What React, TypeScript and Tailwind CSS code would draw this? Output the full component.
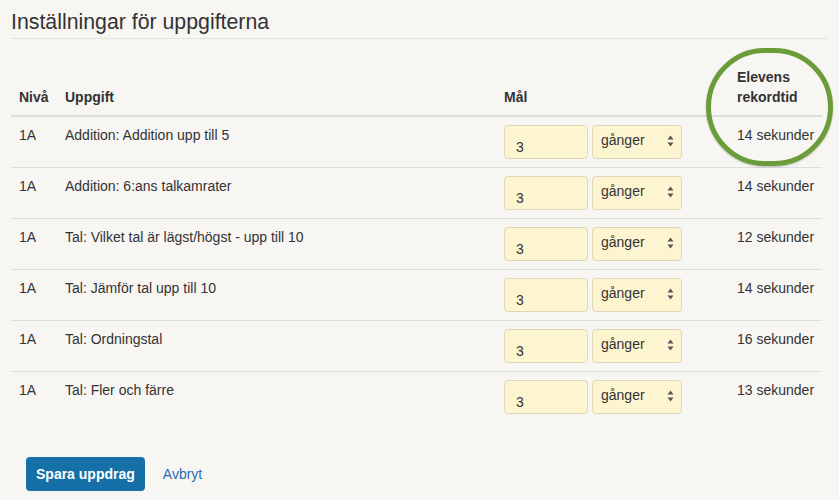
import React from 'react';

type Task = {
  level: string;
  name: string;
  goal: number;
  record: number;
};

const TASKS: Task[] = [
  { level: '1A', name: 'Addition: Addition upp till 5', goal: 3, record: 14 },
  { level: '1A', name: 'Addition: 6:ans talkamrater', goal: 3, record: 14 },
  { level: '1A', name: 'Tal: Vilket tal är lägst/högst - upp till 10', goal: 3, record: 12 },
  { level: '1A', name: 'Tal: Jämför tal upp till 10', goal: 3, record: 14 },
  { level: '1A', name: 'Tal: Ordningstal', goal: 3, record: 16 },
  { level: '1A', name: 'Tal: Fler och färre', goal: 3, record: 13 },
];

const SelectArrows = (): JSX.Element => (
  <svg width="7" height="12" viewBox="0 0 7 12" className="text-[#555]">
    <path d="M3.5 0.5 L6.5 4.5 H0.5 Z" fill="currentColor" />
    <path d="M3.5 11.5 L6.5 7.5 H0.5 Z" fill="currentColor" />
  </svg>
);

const TaskRow = ({ task, last }: { task: Task; last: boolean }): JSX.Element => (
  <tr className={last ? '' : 'border-b border-[#dddddd]'}>
    <td className="px-2 pt-2 pb-2 align-top">{task.level}</td>
    <td className="px-2 pt-2 pb-2 align-top">{task.name}</td>
    <td className="px-2 pt-2 pb-2 align-top">
      <div className="flex gap-[4px]">
        <input
          defaultValue={task.goal}
          type="text"
          aria-label="Mål"
          className="box-border h-[34px] w-[84px] rounded-[4px] border border-[#ddd6b8] bg-[#fdf5d0] pl-[11px] pt-[10px] text-[14px] leading-[20px] text-[#333] outline-none"
        />
        <div className="box-border flex h-[34px] w-[90px] items-start justify-between rounded-[4px] border border-[#ddd6b8] bg-[#fdf5d0] pl-[8px] pr-[7px] pt-[4px]">
          <span className="leading-[20px]">gånger</span>
          <span className="pt-[5px]">
            <SelectArrows />
          </span>
        </div>
      </div>
    </td>
    <td className="px-2 pt-2 pb-2 align-top whitespace-nowrap">{task.record} sekunder</td>
  </tr>
);

export default function App(): JSX.Element {
  return (
    <div className="min-h-[500px] bg-[#f7f6f3] px-[11px] text-[14px] leading-[20px] text-[#333] [font-family:'Liberation_Sans',Arial,sans-serif]">
      <h1 className="border-b border-[#e4e3df] pt-[10px] pb-[4px] text-[21.3px] leading-[24px] font-normal text-[#333]">
        Inställningar för uppgifterna
      </h1>

      <div className="relative mt-[20px] w-[811px]">
        <table className="w-full table-fixed border-collapse text-left">
          <colgroup>
            <col className="w-[46px]" />
            <col className="w-[439px]" />
            <col className="w-[233px]" />
            <col className="w-[93px]" />
          </colgroup>
          <thead>
            <tr className="border-b-2 border-[#dddddd]">
              <th className="px-2 pt-2 pb-2 align-bottom font-bold">Nivå</th>
              <th className="px-2 pt-2 pb-2 align-bottom font-bold">Uppgift</th>
              <th className="px-2 pt-2 pb-2 align-bottom font-bold">Mål</th>
              <th className="px-2 pt-2 pb-2 align-bottom font-bold">Elevens rekordtid</th>
            </tr>
          </thead>
          <tbody>
            {TASKS.map((task, index) => (
              <TaskRow key={task.name} task={task} last={index === TASKS.length - 1} />
            ))}
          </tbody>
        </table>

        {/* green highlight circle drawn over the record column */}
        <div className="pointer-events-none absolute left-[695px] top-[-11px] h-[118px] w-[127px] rounded-full border-[5px] border-[#6b9c3a] shadow-[0_1px_2px_rgba(0,0,0,0.25)]" />
      </div>

      <div className="mt-[35px] flex items-center gap-[18px] pl-[15px]">
        <button
          type="button"
          className="h-[34px] rounded-[4px] bg-[#1670a8] px-[10px] text-[14px] font-bold text-white"
        >
          Spara uppdrag
        </button>
        <a href="#" className="text-[#2a6db5]">
          Avbryt
        </a>
      </div>
    </div>
  );
}
